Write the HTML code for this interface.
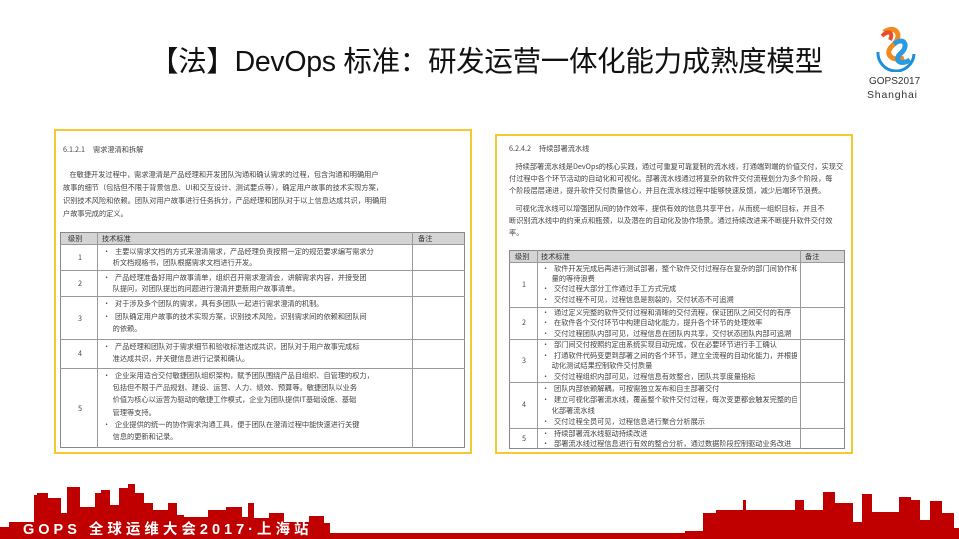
<!DOCTYPE html>
<html><head><meta charset="utf-8">
<style>
*{margin:0;padding:0;box-sizing:border-box}
body{width:959px;height:539px;overflow:hidden;background:#fff;position:relative;font-family:"Liberation Sans","Noto Sans CJK SC",sans-serif}
.a{position:absolute}
.title{left:150px;top:39px;font-size:28.5px;color:#111;white-space:nowrap;letter-spacing:-0.3px}
.box{border:2px solid #f8c830;background:#fff}
.t{position:absolute;font-size:7.2px;color:#444;white-space:nowrap;line-height:8px;overflow:hidden;font-family:"Noto Sans CJK SC",sans-serif}
.tb{position:absolute;border:1px solid #888}
.hl{position:absolute;height:1px;background:#999}
.vl{position:absolute;width:1px;background:#999}
.hdr{position:absolute;background:#d4d4d4}
</style></head><body>
<div class="a title">【法】DevOps 标准：研发运营一体化能力成熟度模型</div>

<svg class="a" style="left:870px;top:22px" width="50" height="50" viewBox="0 0 50 50">
<path d="M8 30 A18 18 0 0 0 44 32" stroke="#1c8fd8" stroke-width="3" fill="none"/>
<path d="M14 10 C26 2 34 14 22 24 C14 32 22 40 34 36" stroke="#f08a1c" stroke-width="5" fill="none"/>
<path d="M24 22 C34 14 40 24 30 32 C24 38 30 44 40 38" stroke="#2a9be0" stroke-width="5" fill="none"/>
<path d="M12 14 C18 8 24 10 20 18" stroke="#e84c2a" stroke-width="4" fill="none"/>
</svg>
<div class="a" style="left:869px;top:76px;font-size:10px;color:#333">GOPS2017</div>
<div class="a" style="left:867px;top:89px;font-size:10.5px;color:#333;letter-spacing:0.8px">Shanghai</div>

<!-- left box -->
<div class="a box" style="left:54px;top:129px;width:418px;height:325px"></div>
<div class="t" style="left:63px;top:146px">6.1.2.1&nbsp;&nbsp;&nbsp;&nbsp;&nbsp;需求澄清和拆解</div>
<div class="t" style="left:63px;top:171px;width:400px">&nbsp;&nbsp;&nbsp;&nbsp;在敏捷开发过程中，需求澄清是产品经理和开发团队沟通和确认需求的过程，包含沟通和明确用户</div>
<div class="t" style="left:63px;top:184px;width:400px">故事的细节（包括但不限于背景信息、UI和交互设计、测试要点等），确定用户故事的技术实现方案，</div>
<div class="t" style="left:63px;top:197px;width:400px">识别技术风险和依赖。团队对用户故事进行任务拆分，产品经理和团队对于以上信息达成共识，明确用</div>
<div class="t" style="left:63px;top:210px;width:400px">户故事完成的定义。</div>
<div class="hdr" style="left:60px;top:232px;width:405px;height:12px"></div>
<div class="tb" style="left:60px;top:232px;width:405px;height:216px"></div>
<div class="vl" style="left:97px;top:232px;height:216px"></div>
<div class="vl" style="left:412px;top:232px;height:216px"></div>
<div class="hl" style="left:60px;top:244px;width:405px"></div>
<div class="hl" style="left:60px;top:270px;width:405px"></div>
<div class="hl" style="left:60px;top:296px;width:405px"></div>
<div class="hl" style="left:60px;top:339px;width:405px"></div>
<div class="hl" style="left:60px;top:368px;width:405px"></div>
<div class="t" style="left:68px;top:235px;color:#333">级别</div>
<div class="t" style="left:102px;top:235px;color:#333">技术标准</div>
<div class="t" style="left:418px;top:235px;color:#333">备注</div>
<div class="t" style="left:78px;top:254px">1</div><div class="t" style="left:78px;top:280px">2</div><div class="t" style="left:78px;top:315px">3</div><div class="t" style="left:78px;top:350px">4</div><div class="t" style="left:78px;top:405px">5</div>
<div class="t" style="left:103px;top:248px;width:305px">•&nbsp;&nbsp;&nbsp;主要以需求文档的方式来澄清需求，产品经理负责按照一定的规范要求编写需求分</div>
<div class="t" style="left:103px;top:259px;width:305px">&nbsp;&nbsp;&nbsp;&nbsp;&nbsp;&nbsp;析文档规格书，团队根据需求文档进行开发。</div>
<div class="t" style="left:103px;top:274px;width:305px">•&nbsp;&nbsp;&nbsp;产品经理准备好用户故事清单，组织召开需求澄清会，讲解需求内容，并接受团</div>
<div class="t" style="left:103px;top:285px;width:305px">&nbsp;&nbsp;&nbsp;&nbsp;&nbsp;&nbsp;队提问，对团队提出的问题进行澄清并更新用户故事清单。</div>
<div class="t" style="left:103px;top:300px;width:305px">•&nbsp;&nbsp;&nbsp;对于涉及多个团队的需求，具有多团队一起进行需求澄清的机制。</div>
<div class="t" style="left:103px;top:313px;width:305px">•&nbsp;&nbsp;&nbsp;团队确定用户故事的技术实现方案，识别技术风险，识别需求间的依赖和团队间</div>
<div class="t" style="left:103px;top:325px;width:305px">&nbsp;&nbsp;&nbsp;&nbsp;&nbsp;&nbsp;的依赖。</div>
<div class="t" style="left:103px;top:343px;width:305px">•&nbsp;&nbsp;&nbsp;产品经理和团队对于需求细节和验收标准达成共识，团队对于用户故事完成标</div>
<div class="t" style="left:103px;top:355px;width:305px">&nbsp;&nbsp;&nbsp;&nbsp;&nbsp;&nbsp;准达成共识，并关键信息进行记录和确认。</div>
<div class="t" style="left:103px;top:372px;width:305px">•&nbsp;&nbsp;&nbsp;企业采用适合交付敏捷团队组织架构，赋予团队围绕产品自组织、自管理的权力，</div>
<div class="t" style="left:103px;top:384px;width:305px">&nbsp;&nbsp;&nbsp;&nbsp;&nbsp;&nbsp;包括但不限于产品规划、建设、运营、人力、绩效、预算等。敏捷团队以业务</div>
<div class="t" style="left:103px;top:396px;width:305px">&nbsp;&nbsp;&nbsp;&nbsp;&nbsp;&nbsp;价值为核心以运营为驱动的敏捷工作模式，企业为团队提供IT基础设施、基础</div>
<div class="t" style="left:103px;top:409px;width:305px">&nbsp;&nbsp;&nbsp;&nbsp;&nbsp;&nbsp;管理等支持。</div>
<div class="t" style="left:103px;top:421px;width:305px">•&nbsp;&nbsp;&nbsp;企业提供的统一的协作需求沟通工具，便于团队在澄清过程中能快速进行关键</div>
<div class="t" style="left:103px;top:433px;width:305px">&nbsp;&nbsp;&nbsp;&nbsp;&nbsp;&nbsp;信息的更新和记录。</div>

<!-- right box -->
<div class="a box" style="left:495px;top:134px;width:358px;height:320px"></div>
<div class="t" style="left:509px;top:145px">6.2.4.2&nbsp;&nbsp;&nbsp;&nbsp;&nbsp;持续部署流水线</div>
<div class="t" style="left:509px;top:163px;width:336px">&nbsp;&nbsp;&nbsp;&nbsp;持续部署流水线是DevOps的核心实践，通过可重复可靠复制的流水线，打通端到端的价值交付，实现交</div>
<div class="t" style="left:509px;top:175px;width:336px">付过程中各个环节活动的自动化和可视化。部署流水线通过将复杂的软件交付流程划分为多个阶段，每</div>
<div class="t" style="left:509px;top:187px;width:336px">个阶段层层递进，提升软件交付质量信心，并且在流水线过程中能够快速反馈，减少后端环节浪费。</div>
<div class="t" style="left:509px;top:205px;width:336px">&nbsp;&nbsp;&nbsp;&nbsp;可视化流水线可以增强团队间的协作效率，提供有效的信息共享平台，从而统一组织目标，并且不</div>
<div class="t" style="left:509px;top:217px;width:336px">断识别流水线中的约束点和瓶颈，以及潜在的自动化及协作场景。通过持续改进来不断提升软件交付效</div>
<div class="t" style="left:509px;top:229px;width:336px">率。</div>
<div class="hdr" style="left:509px;top:250px;width:336px;height:12px"></div>
<div class="tb" style="left:509px;top:250px;width:336px;height:199px"></div>
<div class="vl" style="left:537px;top:250px;height:199px"></div>
<div class="vl" style="left:800px;top:250px;height:199px"></div>
<div class="hl" style="left:509px;top:262px;width:336px"></div>
<div class="hl" style="left:509px;top:307px;width:336px"></div>
<div class="hl" style="left:509px;top:339px;width:336px"></div>
<div class="hl" style="left:509px;top:382px;width:336px"></div>
<div class="hl" style="left:509px;top:428px;width:336px"></div>
<div class="t" style="left:515px;top:253px;color:#333">级别</div>
<div class="t" style="left:541px;top:253px;color:#333">技术标准</div>
<div class="t" style="left:805px;top:253px;color:#333">备注</div>
<div class="t" style="left:522px;top:281px">1</div><div class="t" style="left:522px;top:319px">2</div><div class="t" style="left:522px;top:357px">3</div><div class="t" style="left:522px;top:401px">4</div><div class="t" style="left:522px;top:435px">5</div>
<div class="t" style="left:542px;top:265px;width:255px">•&nbsp;&nbsp;&nbsp;软件开发完成后再进行测试部署，整个软件交付过程存在复杂的部门间协作和大</div>
<div class="t" style="left:542px;top:275px;width:255px">&nbsp;&nbsp;&nbsp;&nbsp;&nbsp;&nbsp;量的等待浪费</div>
<div class="t" style="left:542px;top:285px;width:255px">•&nbsp;&nbsp;&nbsp;交付过程大部分工作通过手工方式完成</div>
<div class="t" style="left:542px;top:296px;width:255px">•&nbsp;&nbsp;&nbsp;交付过程不可见，过程信息是割裂的，交付状态不可追溯</div>
<div class="t" style="left:542px;top:309px;width:255px">•&nbsp;&nbsp;&nbsp;通过定义完整的软件交付过程和清晰的交付流程，保证团队之间交付的有序</div>
<div class="t" style="left:542px;top:319px;width:255px">•&nbsp;&nbsp;&nbsp;在软件各个交付环节中构建自动化能力，提升各个环节的处理效率</div>
<div class="t" style="left:542px;top:330px;width:255px">•&nbsp;&nbsp;&nbsp;交付过程团队内部可见，过程信息在团队内共享，交付状态团队内部可追溯</div>
<div class="t" style="left:542px;top:341px;width:255px">•&nbsp;&nbsp;&nbsp;部门间交付按照约定由系统实现自动完成，仅在必要环节进行手工确认</div>
<div class="t" style="left:542px;top:352px;width:255px">•&nbsp;&nbsp;&nbsp;打通软件代码变更到部署之间的各个环节，建立全流程的自动化能力，并根据自</div>
<div class="t" style="left:542px;top:362px;width:255px">&nbsp;&nbsp;&nbsp;&nbsp;&nbsp;&nbsp;动化测试结果控制软件交付质量</div>
<div class="t" style="left:542px;top:373px;width:255px">•&nbsp;&nbsp;&nbsp;交付过程组织内部可见，过程信息有效整合，团队共享度量指标</div>
<div class="t" style="left:542px;top:385px;width:255px">•&nbsp;&nbsp;&nbsp;团队内部依赖解耦，可按需独立发布和自主部署交付</div>
<div class="t" style="left:542px;top:396px;width:255px">•&nbsp;&nbsp;&nbsp;建立可视化部署流水线，覆盖整个软件交付过程，每次变更都会触发完整的自动</div>
<div class="t" style="left:542px;top:407px;width:255px">&nbsp;&nbsp;&nbsp;&nbsp;&nbsp;&nbsp;化部署流水线</div>
<div class="t" style="left:542px;top:418px;width:255px">•&nbsp;&nbsp;&nbsp;交付过程全员可见，过程信息进行聚合分析展示</div>
<div class="t" style="left:542px;top:430px;width:255px">•&nbsp;&nbsp;&nbsp;持续部署流水线驱动持续改进</div>
<div class="t" style="left:542px;top:440px;width:255px">•&nbsp;&nbsp;&nbsp;部署流水线过程信息进行有效的整合分析，通过数据阶段控制驱动业务改进</div>

<!-- skyline -->
<svg class="a" style="left:0;top:0" width="959" height="539" viewBox="0 0 959 539">
<g fill="#c00000">
<path d="M0 539 L0 527 L9 527 L9 522 L34 522 L34 495 L37 495 L37 493 L48 493 L48 498 L61 498 L61 513 L67 513 L67 487 L80 487 L80 507 L95 507 L95 493 L101 493 L101 490 L110 490 L110 505 L119 505 L119 488 L128 488 L128 484 L135 484 L135 493 L144 493 L144 503 L153 503 L153 510 L168 510 L168 503 L177 503 L177 515 L184 515 L184 517 L208 517 L208 510 L226 510 L226 507 L242 507 L242 517 L248 517 L248 503 L254 503 L254 518 L269 518 L269 513 L284 513 L284 522 L309 522 L309 516 L324 516 L324 523 L330 523 L330 533 L685 533 L685 531 L703 531 L703 513 L716 513 L716 510 L743 510 L743 500 L746 500 L746 510 L795 510 L795 500 L804 500 L804 510 L823 510 L823 492 L835 492 L835 503 L853 503 L853 522 L862 522 L862 494 L872 494 L872 512 L899 512 L899 497 L911 497 L911 500 L920 500 L920 520 L930 520 L930 501 L942 501 L942 513 L954 513 L954 528 L959 528 L959 539 Z"/>
</g>
</svg>
<div class="a" style="left:23px;top:518px;font-size:14.5px;font-weight:bold;color:#fff;letter-spacing:4px;white-space:nowrap">GOPS 全球运维大会2017·上海站</div>
</body></html>
